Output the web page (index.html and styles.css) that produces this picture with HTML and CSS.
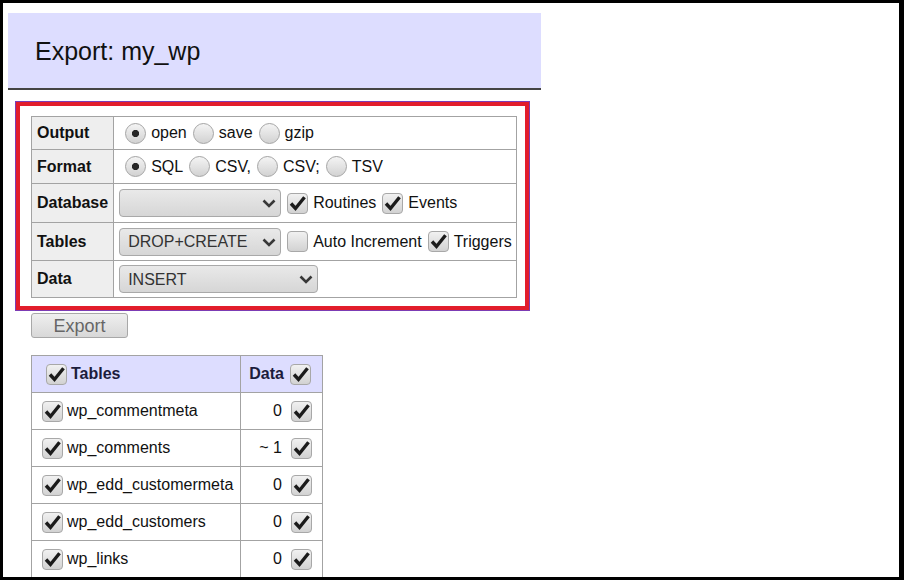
FILE: index.html
```html
<!DOCTYPE html>
<html lang="en">
<head>
    <meta charset="UTF-8">
    <title>Export: my_wp - Adminer</title>
    <link rel="stylesheet" href="styles.css">
</head>
<body>
    <!-- shared glyphs: check mark and select arrow -->
    <svg class="defs" width="0" height="0" aria-hidden="true">
        <symbol id="tick" viewBox="0 0 19 19">
            <path d="M3 9.5 7.5 14.5 16.5 3.3" fill="none" stroke="#1b1b1b" stroke-width="3.4"/>
        </symbol>
        <symbol id="chevron" viewBox="0 0 14 9">
            <path d="M1.5 1.5 7 7 12.5 1.5" fill="none" stroke="#383838" stroke-width="2.6"/>
        </symbol>
    </svg>

    <div class="screen">
        <h2 class="page-title">Export: my_wp</h2>

        <form class="dump">
            <div class="highlight">
                <table class="options">
                    <tr class="row-short">
                        <th>Output</th>
                        <td>
                            <div class="opts">
                                <label class="radio"><input type="radio" name="output" checked><span>open</span></label>
                                <label class="radio"><input type="radio" name="output"><span>save</span></label>
                                <label class="radio"><input type="radio" name="output"><span>gzip</span></label>
                            </div>
                        </td>
                    </tr>
                    <tr class="row-format">
                        <th>Format</th>
                        <td>
                            <div class="opts">
                                <label class="radio"><input type="radio" name="format" checked><span>SQL</span></label>
                                <label class="radio"><input type="radio" name="format"><span>CSV,</span></label>
                                <label class="radio"><input type="radio" name="format"><span>CSV;</span></label>
                                <label class="radio"><input type="radio" name="format"><span>TSV</span></label>
                            </div>
                        </td>
                    </tr>
                    <tr class="row-tall">
                        <th>Database</th>
                        <td>
                            <div class="opts">
                                <span class="select">
                                    <select name="db_style"><option></option></select>
                                    <svg class="arrow"><use href="#chevron"/></svg>
                                </span>
                                <span class="check on"><svg><use href="#tick"/></svg></span><span>Routines</span>
                                <span class="check on"><svg><use href="#tick"/></svg></span><span>Events</span>
                            </div>
                        </td>
                    </tr>
                    <tr class="row-tables">
                        <th>Tables</th>
                        <td>
                            <div class="opts">
                                <span class="select">
                                    <select name="table_style"><option>DROP+CREATE</option></select>
                                    <svg class="arrow"><use href="#chevron"/></svg>
                                </span>
                                <span class="check"></span><span>Auto Increment</span>
                                <span class="check on"><svg><use href="#tick"/></svg></span><span>Triggers</span>
                            </div>
                        </td>
                    </tr>
                    <tr class="row-data">
                        <th>Data</th>
                        <td>
                            <div class="opts">
                                <span class="select wide">
                                    <select name="data_style"><option>INSERT</option></select>
                                    <svg class="arrow"><use href="#chevron"/></svg>
                                </span>
                            </div>
                        </td>
                    </tr>
                </table>
            </div>

            <button type="button" class="btn">Export</button>

            <table class="tables">
                <thead>
                    <tr>
                        <th class="name"><div class="cell"><span class="check on"><svg><use href="#tick"/></svg></span>Tables</div></th>
                        <th class="data"><div class="cell end">Data<span class="check on"><svg><use href="#tick"/></svg></span></div></th>
                    </tr>
                </thead>
                <tbody>
                    <tr>
                        <td class="name"><div class="cell"><span class="check on"><svg><use href="#tick"/></svg></span>wp_commentmeta</div></td>
                        <td class="data"><div class="cell end">0<span class="check on"><svg><use href="#tick"/></svg></span></div></td>
                    </tr>
                    <tr>
                        <td class="name"><div class="cell"><span class="check on"><svg><use href="#tick"/></svg></span>wp_comments</div></td>
                        <td class="data"><div class="cell end">~ 1<span class="check on"><svg><use href="#tick"/></svg></span></div></td>
                    </tr>
                    <tr>
                        <td class="name"><div class="cell"><span class="check on"><svg><use href="#tick"/></svg></span>wp_edd_customermeta</div></td>
                        <td class="data"><div class="cell end">0<span class="check on"><svg><use href="#tick"/></svg></span></div></td>
                    </tr>
                    <tr>
                        <td class="name"><div class="cell"><span class="check on"><svg><use href="#tick"/></svg></span>wp_edd_customers</div></td>
                        <td class="data"><div class="cell end">0<span class="check on"><svg><use href="#tick"/></svg></span></div></td>
                    </tr>
                    <tr>
                        <td class="name"><div class="cell"><span class="check on"><svg><use href="#tick"/></svg></span>wp_links</div></td>
                        <td class="data"><div class="cell end">0<span class="check on"><svg><use href="#tick"/></svg></span></div></td>
                    </tr>
                </tbody>
            </table>
        </form>
    </div>
</body>
</html>
```

FILE: styles.css
```css
* {
    box-sizing: border-box;
}

body {
    margin: 0;
    background: #000;
    font-family: "Liberation Sans", Arial, sans-serif;
    font-size: 16px;
    color: #111;
}

.defs {
    position: absolute;
}

.screen {
    width: 904px;
    height: 580px;
    border-style: solid;
    border-color: #000;
    border-width: 3px 5px 3px 3px;
    background: #fff;
    overflow: hidden;
}

.page-title {
    margin: 10px 0 0 5px;
    width: 533px;
    padding: 24px 25px 22px 27px;
    font-size: 25px;
    font-weight: normal;
    line-height: 29px;
    color: #111;
    background: #ddf;
    border-bottom: 2px solid #444;
}

/* red frame round the option table */
.highlight {
    margin: 12px 0 0 13px;
    width: 513px;
    padding: 10px 0 8px 11px;
    border: 4px solid #e21d2b;
    outline: 1px solid #7c3cb4;
}

.options,
.tables {
    border-collapse: collapse;
    border: 1px solid #a3a3a3;
}

.options {
    width: 486px;
}

.options th,
.options td,
.tables th,
.tables td {
    border: 1px solid #a3a3a3;
    padding: 0 5px;
    vertical-align: middle;
    white-space: nowrap;
}

.options th {
    width: 81px;
    text-align: left;
    background: #eee;
    font-weight: bold;
}

.options td {
    padding-right: 4px;
}

.row-short { height: 33px; }
.row-format { height: 34px; }
.row-tall { height: 39px; }
.row-tables { height: 38px; }
.row-data { height: 37px; }

.opts {
    display: flex;
    align-items: center;
}

.radio {
    display: flex;
    align-items: center;
}

.radio input {
    appearance: none;
    -webkit-appearance: none;
    flex: none;
    width: 21px;
    height: 21px;
    margin: 0 5px 0 6px;
    border: 1px solid #a6a6a6;
    border-radius: 50%;
    background: linear-gradient(#f4f4f4, #d2d2d2);
}

.radio input:checked {
    background: radial-gradient(circle, #262626 0 3.2px, rgba(38, 38, 38, 0) 4px), linear-gradient(#f4f4f4, #d2d2d2);
}

.check {
    display: inline-flex;
    flex: none;
    width: 21px;
    height: 21px;
    margin: 0 5px 0 6px;
    border: 1px solid #a8a8a8;
    border-radius: 4px;
    background: linear-gradient(#f1f1f1, #d2d2d2);
}

.check svg {
    width: 19px;
    height: 19px;
}

.select {
    position: relative;
    display: inline-block;
    flex: none;
    width: 162px;
    height: 28px;
}

.select.wide {
    width: 199px;
}

.select select {
    appearance: none;
    -webkit-appearance: none;
    width: 100%;
    height: 100%;
    padding: 0 24px 0 8px;
    font: inherit;
    color: #333;
    border: 1px solid #a9a9a9;
    border-radius: 4px;
    background: linear-gradient(#e9e9e9, #d6d6d6);
}

.select .arrow {
    position: absolute;
    right: 5px;
    top: 10px;
    width: 14px;
    height: 9px;
    pointer-events: none;
}

.btn {
    display: block;
    margin: 3px 0 0 28px;
    width: 97px;
    height: 25px;
    padding: 0;
    font: inherit;
    font-size: 18px;
    line-height: 1;
    color: #666;
    border: 1px solid #a8a8a8;
    border-radius: 3px;
    background: linear-gradient(#efefef, #d8d8d8);
}

.tables {
    margin: 17px 0 0 28px;
    width: 292px;
    table-layout: fixed;
}

.tables tr {
    height: 37px;
}

.tables thead th {
    background: #ddf;
    color: #1c1c3c;
    font-weight: bold;
}

.tables .name {
    width: 209px;
    padding-left: 4px;
}

.tables thead .name {
    padding-left: 8px;
}

.tables .data {
    padding-right: 4px;
}

.tables thead .data {
    padding-right: 5px;
}

.cell {
    display: flex;
    align-items: center;
}

.cell.end {
    justify-content: flex-end;
}

.name .check {
    margin: 0 4px 0 6px;
}

.data .check {
    margin: 0 6px 0 9px;
}

.tables thead .data .check {
    margin-left: 6px;
}
```
